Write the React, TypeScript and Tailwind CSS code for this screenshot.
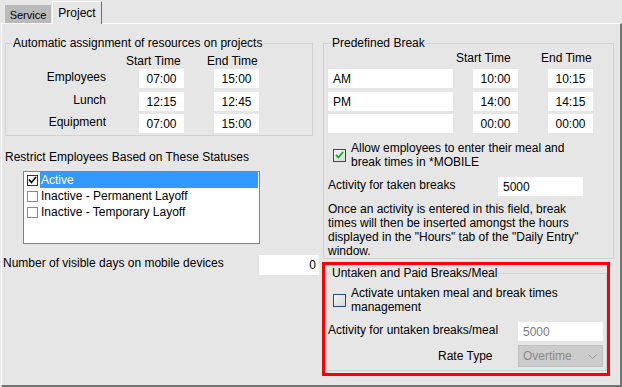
import React from "react";

function TimeBox({ value }: { value: string }) {
  return (
    <div className="h-[19px] w-[45px] bg-white flex items-center justify-center">{value}</div>
  );
}

function WinCheck({ checked }: { checked: boolean }) {
  return (
    <div className="w-[13px] h-[13px] shrink-0 border border-[#1f4f82] bg-gradient-to-br from-[#f6f6f6] to-[#d8d8d8] flex items-center justify-center">
      {checked && (
        <svg width="9" height="8" viewBox="0 0 9 8">
          <polyline points="1,4 3.5,6.5 8,1" fill="none" stroke="#1ea51e" strokeWidth="1.8" />
        </svg>
      )}
    </div>
  );
}

function ListCheck({ checked }: { checked: boolean }) {
  return (
    <div
      className={
        checked
          ? "w-[11px] h-[11px] shrink-0 border border-[#333333] bg-white flex items-center justify-center"
          : "w-[11px] h-[11px] shrink-0 border border-[#8a8a8a] bg-white"
      }
    >
      {checked && (
        <svg width="9" height="8" viewBox="0 0 9 8">
          <polyline points="1,3.5 3.5,6.5 8,1" fill="none" stroke="#000" strokeWidth="1.7" />
        </svg>
      )}
    </div>
  );
}

export default function App() {
  return (
    <div className="w-[622px] h-[387px] bg-[#e6e6e6] font-['Liberation_Sans',Arial,sans-serif] text-[12px] leading-[14px] text-black overflow-hidden">
      {/* tabs */}
      <div className="flex h-[23px] items-end pl-[5px]">
        <div className="h-[18px] w-[46px] bg-[#bababa] text-[11px] pt-[3px] text-center">Service</div>
        <div className="relative z-10 ml-[1px] mb-[-1px] h-[23px] w-[50px] bg-[#e6e6e6] border-t border-l border-white border-r border-r-[#6e6e6e] pt-[4px] text-center">
          Project
        </div>
      </div>

      {/* panel */}
      <div className="ml-[1px] h-[364px] w-[621px] border-t border-l border-white border-r-2 border-b-2 border-r-[#727272] border-b-[#727272] flex">
        {/* left column */}
        <div className="w-[319px] flex flex-col">
          <div className="ml-[3px] mt-[19px] w-[308px] h-[93px] border border-[#d2d2d2]">
            <div className="-mt-[8px] ml-[6px] px-[1px] w-fit bg-[#e6e6e6]">
              Automatic assignment of resources on projects
            </div>
            <div className="mt-[4px] flex">
              <div className="ml-[120px] w-[81px]">Start Time</div>
              <div>End Time</div>
            </div>
            {[
              ["Employees", "07:00", "15:00", "mt-[1px]"],
              ["Lunch", "12:15", "12:45", "mt-[4px]"],
              ["Equipment", "07:00", "15:00", "mt-[3px]"],
            ].map(([label, a, b, mt]) => (
              <div key={label} className={"flex items-start " + mt}>
                <div className="w-[100px] text-right pt-[1px]">{label}</div>
                <div className="ml-[33px]">
                  <TimeBox value={a} />
                </div>
                <div className="ml-[30px]">
                  <TimeBox value={b} />
                </div>
              </div>
            ))}
          </div>

          <div className="mt-[14px] ml-[3px]">Restrict Employees Based on These Statuses</div>

          <div className="mt-[7px] ml-[21px] w-[237px] h-[73px] border border-[#828282] bg-white pl-[3px] pr-[1px]">
            {[
              ["Active", true],
              ["Inactive - Permanent Layoff", false],
              ["Inactive - Temporary Layoff", false],
            ].map(([label, checked]) => (
              <div key={label as string} className="h-[16px] flex items-center">
                <ListCheck checked={checked as boolean} />
                <div
                  className={
                    checked
                      ? "ml-[2px] flex-1 h-[16px] bg-[#3399ff] text-white pl-[1px] leading-[16px]"
                      : "ml-[2px] flex-1 h-[16px] pl-[1px] leading-[16px]"
                  }
                >
                  {label as string}
                </div>
              </div>
            ))}
          </div>

          <div className="mt-[11px] ml-[1px] w-[316px] flex justify-between items-start">
            <div className="pt-[1px]">Number of visible days on mobile devices</div>
            <div className="w-[60px] h-[20px] bg-white flex items-center justify-end pr-[3px]">0</div>
          </div>
        </div>

        {/* right column */}
        <div className="ml-[2px] flex flex-col">
          <div className="mt-[19px] w-[291px] h-[216px] border border-[#d2d2d2]">
            <div className="-mt-[8px] ml-[7px] px-[1px] w-fit bg-[#e6e6e6]">Predefined Break</div>
            <div className="mt-[1px] flex">
              <div className="ml-[132px] w-[85px]">Start Time</div>
              <div>End Time</div>
            </div>
            {[
              ["AM", "10:00", "10:15", "mt-[4px]"],
              ["PM", "14:00", "14:15", "mt-[4px]"],
              ["", "00:00", "00:00", "mt-[3px]"],
            ].map(([name, a, b, mt], i) => (
              <div key={i} className={"flex " + mt}>
                <div className="ml-[4px] w-[125px] h-[19px] bg-white pl-[5px] flex items-center">{name}</div>
                <div className="ml-[20px]">
                  <TimeBox value={a} />
                </div>
                <div className="ml-[30px]">
                  <TimeBox value={b} />
                </div>
              </div>
            ))}

            <div className="mt-[8px] ml-[9px] flex items-center">
              <WinCheck checked={true} />
              <div className="ml-[5px]">
                Allow employees to enter their meal and
                <br />
                break times in *MOBILE
              </div>
            </div>

            <div className="mt-[8px] ml-[4px] flex items-start">
              <div className="w-[170px] pt-[1px]">Activity for taken breaks</div>
              <div className="w-[85px] h-[19px] bg-white pl-[5px] flex items-center">5000</div>
            </div>

            <div className="mt-[6px] ml-[4px]">
              Once an activity is entered in this field, break
              <br />
              times will then be inserted amongst the hours
              <br />
              displayed in the "Hours" tab of the "Daily Entry"
              <br />
              window.
            </div>
          </div>

          {/* red highlighted box */}
          <div className="mt-[3px] -ml-[1px] w-[288px] h-[114px] border-[3px] border-[#ff0000]">
            <div className="mt-[8px] h-[98px] border border-[#d2d2d2]">
              <div className="-mt-[8px] ml-[5px] px-[1px] w-fit bg-[#e6e6e6]">Untaken and Paid Breaks/Meal</div>
              <div className="mt-[6px] ml-[7px] flex items-center">
                <WinCheck checked={false} />
                <div className="ml-[5px]">
                  Activate untaken meal and break times
                  <br />
                  management
                </div>
              </div>
              <div className="mt-[8px] ml-[2px] flex items-start">
                <div className="w-[190px] pt-[1px]">Activity for untaken breaks/meal</div>
                <div className="w-[85px] h-[19px] bg-white pl-[5px] flex items-center text-[#7a7a7a]">5000</div>
              </div>
              <div className="mt-[4px] ml-[112px] flex items-center">
                <div className="w-[80px]">Rate Type</div>
                <div className="w-[85px] h-[22px] bg-[#cccccc] border border-[#bfbfbf] flex items-center justify-between pl-[4px] pr-[5px] text-[#8a8a8a]">
                  <span>Overtime</span>
                  <svg width="9" height="5" viewBox="0 0 9 5">
                    <polyline points="0.5,0.5 4.5,4.5 8.5,0.5" fill="none" stroke="#9a9a9a" strokeWidth="1" />
                  </svg>
                </div>
              </div>
            </div>
          </div>
        </div>
      </div>
    </div>
  );
}
